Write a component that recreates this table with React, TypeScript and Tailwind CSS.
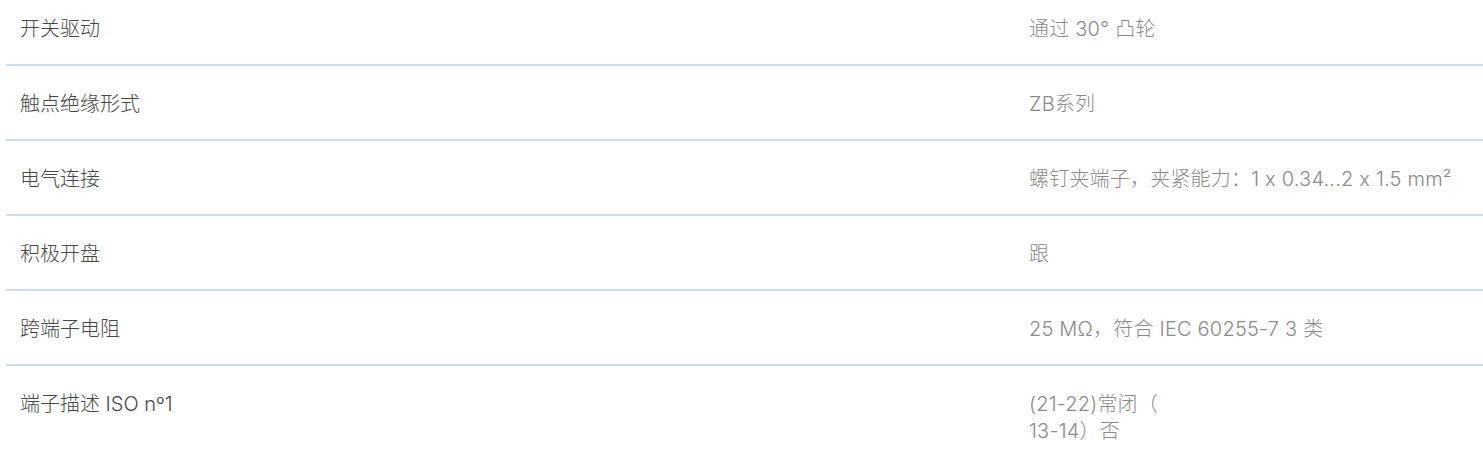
import React from 'react';

type Spec = { label: string; value: React.ReactNode };

const specs: Spec[] = [
  { label: '开关驱动', value: '通过 30° 凸轮' },
  { label: '触点绝缘形式', value: 'ZB系列' },
  { label: '电气连接', value: '螺钉夹端子，夹紧能力：1 x 0.34...2 x 1.5 mm²' },
  { label: '积极开盘', value: '跟' },
  { label: '跨端子电阻', value: '25 MΩ，符合 IEC 60255-7 3 类' },
  {
    label: '端子描述 ISO nº1',
    value: (
      <>
        (21-22)常闭（
        <br />
        13-14）否
      </>
    ),
  },
];

const App = () => {
  return (
    <div
      className="bg-white w-[1483px] h-[451px] overflow-hidden [font-feature-settings:'calt'_0]"
      style={{ fontFamily: '"Inter", "Noto Sans CJK SC", sans-serif' }}
    >
      <div className="ml-[6px] -mt-[9px]">
        {specs.map((s, i) => (
          <div
            key={s.label}
            className={`flex ${i < specs.length - 1 ? 'border-b-2 border-[#d0dde9]' : ''}`}
          >
            <div className="w-[1009px] shrink-0 px-[14px] pt-[25px] pb-[21px] text-[20px] leading-[27px] text-[#474747] font-light">
              {s.label}
            </div>
            <div className="flex-1 px-[14px] pt-[25px] pb-[21px] text-[20px] leading-[27px] text-[#8a8a8a] font-light tracking-[0.01em] whitespace-nowrap">
              {s.value}
            </div>
          </div>
        ))}
      </div>
    </div>
  );
};

export default App;
